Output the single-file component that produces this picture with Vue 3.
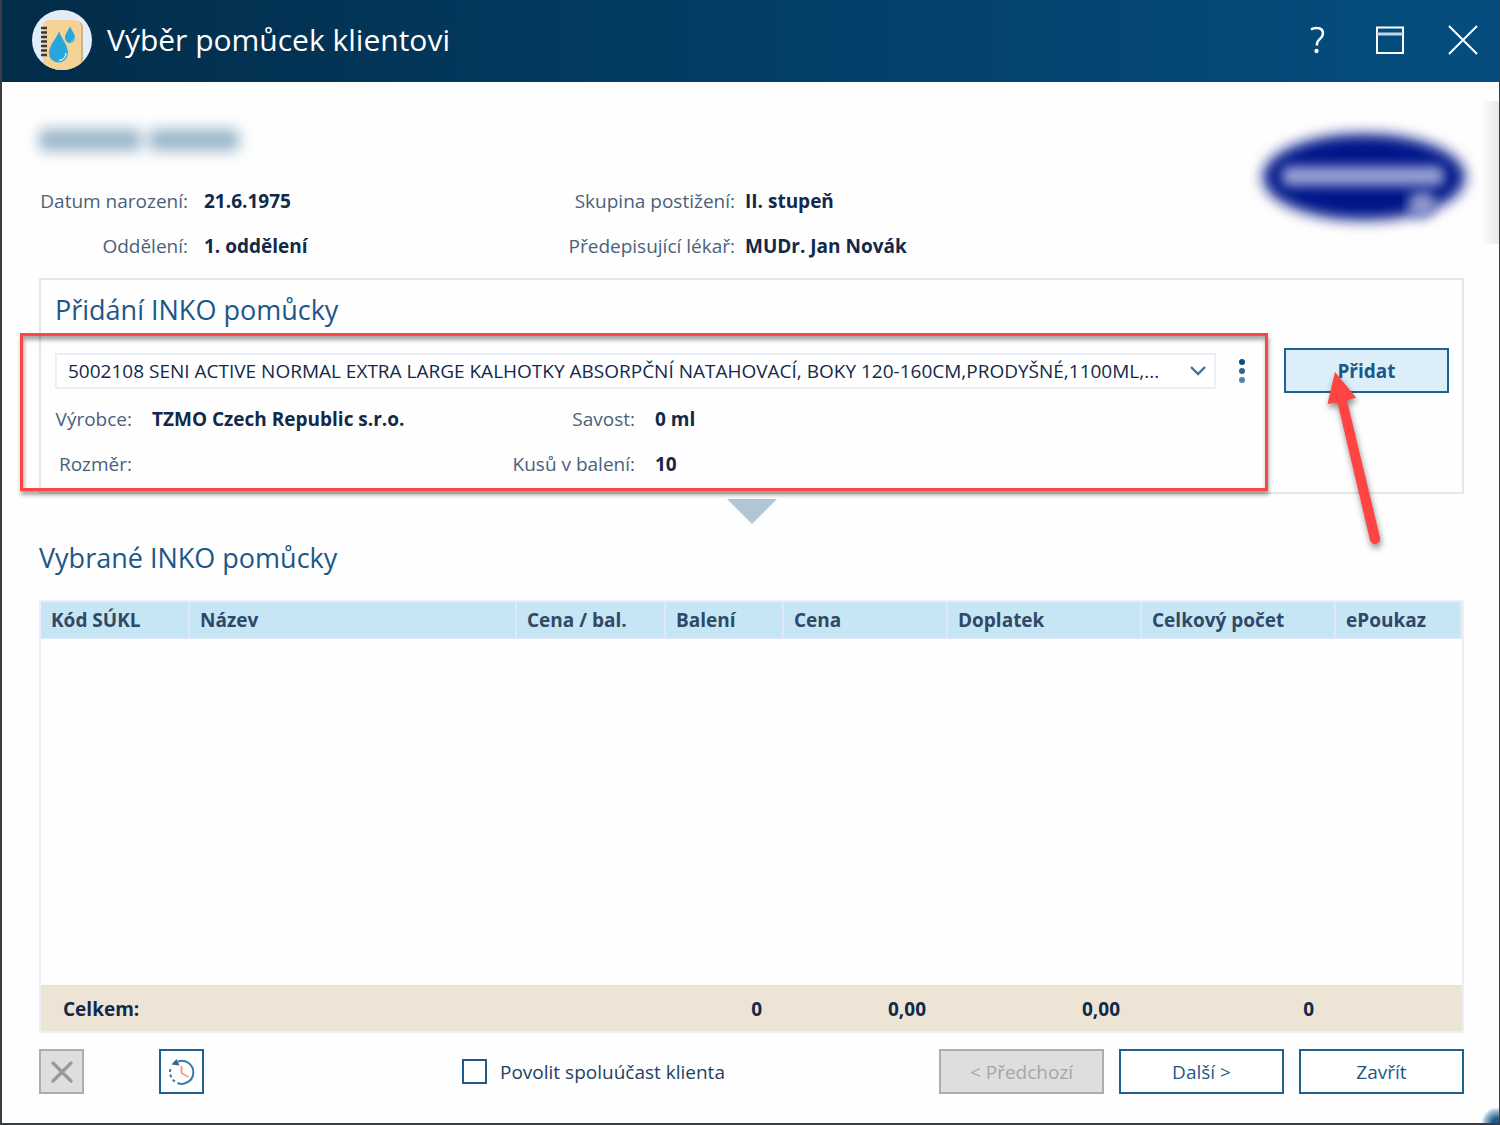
<script setup>
import { ref } from "vue";

const product = ref("5002108");
const copay = ref(false);

const columns = [
  { key: "code", title: "Kód SÚKL" },
  { key: "name", title: "Název" },
  { key: "price", title: "Cena / bal." },
  { key: "packs", title: "Balení" },
  { key: "total", title: "Cena" },
  { key: "surcharge", title: "Doplatek" },
  { key: "count", title: "Celkový počet" },
  { key: "voucher", title: "ePoukaz" },
]
</script>

<template>
  <div class="window">
    <header class="titlebar">
      <svg class="logo" width="60" height="60" viewBox="0 0 60 60">
        <defs>
          <clipPath id="logoClip"><circle cx="30" cy="30" r="30" /></clipPath>
        </defs>
        <g clip-path="url(#logoClip)">
          <rect width="60" height="60" fill="#e3edf7" />
          <rect x="13" y="11" width="38" height="52" rx="6" fill="#c9b48f" />
          <rect x="11" y="10" width="38" height="54" rx="6" fill="#f5d397" />
          <path d="M9 18h6M9 22.500h6M9 27h6M9 31.500h6M9 36h6M9 40.500h6M9 45h6" stroke="#3a3a3a" stroke-width="2.600" />
          <path d="M27 21C25 28 17 35 17 43a9.500 9.500 0 0 0 19 0C36 35 29 28 27 21z" fill="#29a5de" />
          <path d="M38 16c-1 4-5 7-5 12a5 5 0 0 0 10 0c0-5-4-8-5-12z" fill="#29a5de" />
          <path d="M34 43c0 4-3 7-7 7.500" fill="none" stroke="#d8f0fb" stroke-width="1.500" />
          <path d="M42 28c0 2-1 3-3 3.500" fill="none" stroke="#9dd8f2" stroke-width="1" />
        </g>
      </svg>
      <h1>Výběr pomůcek klientovi</h1>
      <div class="windowButtons">
        <button type="button" aria-label="Nápověda">
          <svg width="30" height="30" viewBox="0 0 30 30" fill="none" stroke="#fff" stroke-width="2.500">
            <path d="M9 4.500c2-1.300 4-1.700 6-1.500 4 .2 6 2.500 6 5.500 0 5-6 6-6 10v2" />
            <circle cx="14.500" cy="26" r="1.400" fill="#fff" stroke-width="1.500" />
          </svg>
        </button>
        <button type="button" aria-label="Maximalizovat">
          <svg width="30" height="30" viewBox="0 0 30 30" fill="none" stroke="#fff" stroke-width="2">
            <path d="M2 2.500h26v25.500H2z" />
            <path d="M2 9h26" stroke="#c4d6e3" stroke-width="3" />
          </svg>
        </button>
        <button type="button" aria-label="Zavřít okno">
          <svg width="30" height="30" viewBox="0 0 30 30" fill="none" stroke="#fff" stroke-width="2">
            <path d="M1 1l28 28M29 1L1 29" />
          </svg>
        </button>
      </div>
    </header>

    <main class="content">
      <section class="client">
        <div class="clientName" aria-hidden="true"><span class="w1"></span><span class="w2"></span></div>
        <dl class="info clientInfo">
          <dt>Datum narození:</dt>
          <dd>21.6.1975</dd>
          <dt>Skupina postižení:</dt>
          <dd>II. stupeň</dd>
          <dt>Oddělení:</dt>
          <dd>1. oddělení</dd>
          <dt>Předepisující lékař:</dt>
          <dd>MUDr. Jan Novák</dd>
        </dl>
        <svg class="brand" width="250" height="140" viewBox="0 0 250 140" aria-hidden="true">
          <defs>
            <filter id="soft" x="-20%" y="-40%" width="140%" height="180%"><feGaussianBlur stdDeviation="7" /></filter>
            <filter id="softer" x="-20%" y="-150%" width="140%" height="400%"><feGaussianBlur stdDeviation="6" /></filter>
          </defs>
          <ellipse cx="124" cy="72" rx="101" ry="43" fill="#001689" filter="url(#soft)" />
          <rect x="42" y="61" width="162" height="20" rx="6" fill="#98a0d4" filter="url(#softer)" />
          <circle cx="182" cy="100" r="14" fill="#8c96cc" filter="url(#softer)" />
        </svg>
      </section>

      <section class="panel">
        <h2>Přidání INKO pomůcky</h2>
        <div class="pickRow">
          <div class="selectWrap">
            <select v-model="product" aria-label="INKO pomůcka">
              <option value="5002108">5002108 SENI ACTIVE NORMAL EXTRA LARGE KALHOTKY ABSORPČNÍ NATAHOVACÍ, BOKY 120-160CM,PRODYŠNÉ,1100ML,...</option>
            </select>
            <svg class="chevron" width="16" height="10" viewBox="0 0 16 10" fill="none" stroke="#44709b" stroke-width="2.400">
              <path d="M1 1l7 7 7-7" />
            </svg>
          </div>
          <button type="button" class="more" aria-label="Další možnosti">
            <svg width="8" height="26" viewBox="0 0 8 26">
              <circle cx="4" cy="4" r="3" fill="#0c4d80" />
              <circle cx="4" cy="13" r="3" fill="#2b6590" />
              <circle cx="4" cy="22" r="3" fill="#5183a8" />
            </svg>
          </button>
          <button type="button" class="btn add">Přidat</button>
        </div>
        <dl class="info productInfo">
          <dt>Výrobce:</dt>
          <dd>TZMO Czech Republic s.r.o.</dd>
          <dt>Savost:</dt>
          <dd>0 ml</dd>
          <dt>Rozměr:</dt>
          <dd></dd>
          <dt>Kusů v balení:</dt>
          <dd>10</dd>
        </dl>

        <div class="highlight"></div>
        <svg class="arrow" width="80" height="190" viewBox="0 0 80 190" aria-hidden="true">
          <path d="M25 11L17.500 43l10-1.500L60 179a5 5 0 0 0 10-2.500L37 39.500l9-3z" fill="#ff4444" />
        </svg>
      </section>

      <svg class="down" width="50" height="25" viewBox="0 0 50 25" aria-hidden="true">
        <path d="M0 0h50L25 25z" fill="#b0c6d4" />
      </svg>

      <h2 class="chosen">Vybrané INKO pomůcky</h2>
      <div class="tableWrap">
        <table>
          <colgroup>
            <col v-for="col in columns" :key="col.key" :class="col.key">
          </colgroup>
          <thead>
            <tr>
              <th v-for="col in columns" :key="col.key" scope="col">{{ col.title }}</th>
            </tr>
          </thead>
          <tbody>
            <tr><td :colspan="columns.length"></td></tr>
          </tbody>
          <tfoot>
            <tr>
              <th colspan="3" scope="row">Celkem:</th>
              <td>0</td>
              <td>0,00</td>
              <td>0,00</td>
              <td>0</td>
              <td></td>
            </tr>
          </tfoot>
        </table>
      </div>

      <footer class="actions">
        <button type="button" class="iconBtn" disabled aria-label="Smazat">
          <svg width="24" height="24" viewBox="0 0 24 24" stroke="#999" stroke-width="3.200" stroke-linecap="round">
            <path d="M3 3l18 18M21 3L3 21" />
          </svg>
        </button>
        <button type="button" class="iconBtn history" aria-label="Historie">
          <svg width="26" height="28" viewBox="0 0 26 28" fill="none">
            <path d="M9 3.500A11.500 11.500 0 1 1 8.500 25" stroke="#3f789f" stroke-width="2" />
            <path d="M6 23.500a11.500 11.500 0 0 1-4-14" stroke="#3f789f" stroke-width="2" stroke-dasharray="3 2.500" />
            <path d="M7.500 1l3 6.500-8-1z" fill="#2b6590" />
            <path d="M12.500 8v7l7 4" stroke="#f59a9a" stroke-width="2" />
          </svg>
        </button>
        <label class="copay">
          <input v-model="copay" type="checkbox">
          Povolit spoluúčast klienta
        </label>
        <div class="nav">
          <button type="button" class="btn" disabled>&lt; Předchozí</button>
          <button type="button" class="btn">Další &gt;</button>
          <button type="button" class="btn">Zavřít</button>
        </div>
      </footer>
    </main>
    <div class="edgeShade"></div>
    <div class="cornerGlow"></div>
  </div>
</template>

<style>
body {
  margin: 0;
  background: #fff;
}
</style>

<style scoped>
* {
  box-sizing: border-box;
}

.window {
  position: relative;
  display: flex;
  flex-direction: column;
  min-height: 100vh;
  overflow: hidden;
  border: solid #3a3d42;
  border-width: 0 1px 2px 2px;
  background: #fefefe;
  color: #12294a;
  font-family: "Open Sans", "Noto Sans", sans-serif;
  font-size: 19px;
  line-height: 26px;
}

h1, h2, dl, dd {
  margin: 0;
}

button, select {
  font: inherit;
}

.titlebar {
  display: flex;
  align-items: center;
  height: 82px;
  padding: 0 21px 2px 30px;
  background: linear-gradient(90deg, #022c49, #044d7e 95%);
  color: #fff;
}

.logo {
  margin-right: 15px;
}

h1 {
  font-size: 30px;
  line-height: 40px;
  font-weight: 400;
}

.windowButtons {
  display: flex;
  gap: 43px;
  margin-left: auto;
}

.windowButtons button {
  display: flex;
  padding: 0;
  border: 0;
  background: none;
}

.content {
  flex: 1;
  display: flex;
  flex-direction: column;
  padding: 40px 35px 29px 37px;
}

.client {
  position: relative;
}

/* the name and the brand are kept unreadable */
.clientName {
  display: flex;
  gap: 8px;
  height: 36px;
  padding-top: 7px;
  filter: blur(7px);
}

.clientName span {
  height: 22px;
  border-radius: 5px;
  background: #9ab6cb;
}

.clientName .w1 {
  width: 102px;
}

.clientName .w2 {
  width: 90px;
}

.brand {
  position: absolute;
  top: -17px;
  right: -26px;
}

h2 {
  font-size: 27px;
  line-height: 36px;
  font-weight: 400;
  color: #1d5788;
}

.info {
  display: grid;
  row-gap: 19px;
}

.info dt {
  text-align: right;
  white-space: nowrap;
  color: #4a617c;
}

.info dd {
  font-weight: 700;
}

.clientInfo {
  grid-template-columns: 149px 362px 185px auto;
  padding: 30px 0 19px;
}

.clientInfo dd {
  padding-left: 16px;
}

.clientInfo dt + dd:nth-of-type(even) {
  padding-left: 10px;
}

.panel {
  position: relative;
  padding: 12px 13px 15px 14px;
  border: 2px solid #e6e6e6;
}

.pickRow {
  display: flex;
  align-items: center;
  margin-top: 20px;
}

.selectWrap {
  position: relative;
  flex: 1;
  min-width: 0;
}

select {
  display: block;
  width: 100%;
  height: 36px;
  padding: 0 40px 0 11px;
  border: 2px solid #eaeff8;
  border-radius: 0;
  background: #fff;
  color: #12294a;
  appearance: none;
  text-overflow: ellipsis;
}

.chevron {
  position: absolute;
  top: 13px;
  right: 10px;
  pointer-events: none;
}

.more {
  display: flex;
  justify-content: center;
  width: 52px;
  margin-right: 16px;
  padding: 0;
  border: 0;
  background: none;
}

.btn {
  width: 165px;
  height: 45px;
  padding: 0;
  border: 2px solid #1f618f;
  background: #fff;
  color: #1d5788;
}

.btn.add {
  background: #dceefa;
  font-weight: 700;
}

.btn:disabled, .iconBtn:disabled {
  border-color: #adadad;
  background: #dedede;
  color: #a6a6a6;
}

.productInfo {
  grid-template-columns: 77px 360px 143px auto;
  padding-top: 13px;
}

.productInfo dd {
  padding-left: 20px;
}

.highlight {
  position: absolute;
  top: 53px;
  right: 194px;
  bottom: 1px;
  left: -21px;
  border: 3px solid #ff4444;
  box-shadow: 1px 4px 4px rgba(0, 0, 0, 0.35), inset 1px 4px 4px rgba(0, 0, 0, 0.35);
  pointer-events: none;
}

.arrow {
  position: absolute;
  top: 81px;
  right: 72px;
  filter: drop-shadow(1px 4px 3px rgba(0, 0, 0, 0.45));
  pointer-events: none;
}

.down {
  align-self: center;
  margin-top: 5px;
}

.chosen {
  margin: 16px 0 24px;
}

.tableWrap {
  flex: 1;
  display: grid;
}

table {
  width: 100%;
  border: 2px solid #eaeff8;
  border-spacing: 0;
  table-layout: fixed;
}

.code {
  width: 149px;
}

.price {
  width: 149px;
}

.packs {
  width: 118px;
}

.total {
  width: 164px;
}

.surcharge, .count {
  width: 194px;
}

.voucher {
  width: 126px;
}

thead th {
  height: 37px;
  padding: 0 10px;
  border: solid #dfe8f6;
  border-width: 0 2px 1px 0;
  background: #c6e5f5;
  color: #2f4966;
  text-align: left;
}

tfoot th, tfoot td {
  height: 46px;
  padding: 0 22px;
  border-top: 1px solid #e0dfe2;
  background: #eee4d6;
  font-weight: 700;
  text-align: right;
}

tfoot th {
  text-align: left;
}

.actions {
  display: flex;
  align-items: center;
  margin-top: 16px;
}

.iconBtn {
  display: flex;
  align-items: center;
  justify-content: center;
  width: 45px;
  height: 45px;
  padding: 0;
  border: 2px solid #1f618f;
  background: #fff;
}

.history {
  margin-left: 75px;
}

.copay {
  display: flex;
  align-items: center;
  gap: 13px;
  margin-left: 258px;
  color: #1d3f66;
}

.copay input {
  width: 25px;
  height: 25px;
  margin: 0;
  border: 2px solid #1f5a8e;
  background: #fff;
  appearance: none;
}

.copay input:checked {
  background: #1f5a8e;
}

.nav {
  display: flex;
  gap: 15px;
  margin-left: auto;
}

.edgeShade {
  position: absolute;
  top: 101px;
  right: -1px;
  width: 20px;
  height: 143px;
  background: linear-gradient(90deg, #fefefe, #e8e8e8);
}

.cornerGlow {
  position: absolute;
  right: -14px;
  bottom: -16px;
  width: 32px;
  height: 32px;
  border-radius: 50%;
  background: radial-gradient(#1f5a86 20%, #a9c3d5 55%, transparent 70%);
}
</style>
